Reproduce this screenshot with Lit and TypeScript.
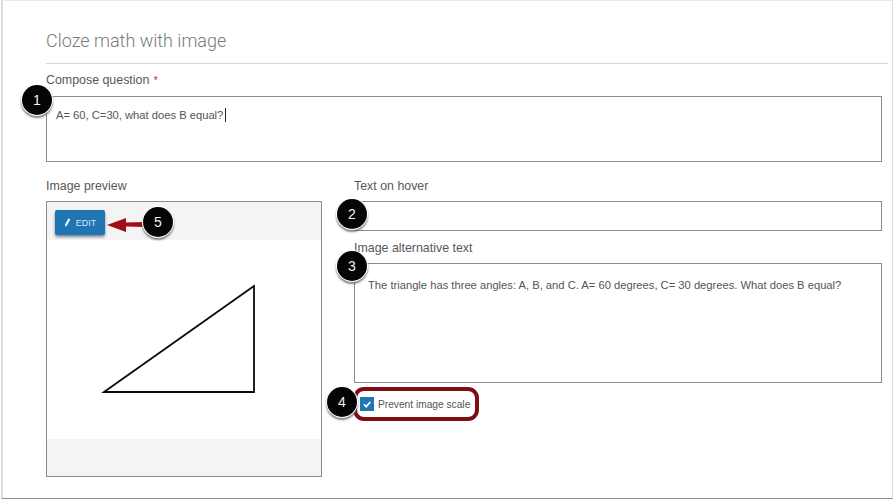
import { LitElement, css, html } from "lit";
import { customElement, property } from "lit/decorators.js";

@customElement("call-out")
class CallOut extends LitElement {
  @property({ type: Number }) x = 0;
  @property({ type: Number }) y = 0;
  @property() n = "";

  static styles = css`
    .dot {
      position: absolute;
      width: 30px;
      height: 30px;
      margin: -15px 0 0 -15px;
      border-radius: 50%;
      background: #050505;
      color: #f2f2f2;
      font: 14px/30px "Liberation Sans", Arial, sans-serif;
      text-align: center;
      box-shadow: 0 0 0 1px #fff, 0 2px 2px 1px rgba(90, 90, 90, 0.75);
    }
  `;

  render() {
    return html`<div class="dot" style="left:${this.x}px;top:${this.y}px">${this.n}</div>`;
  }
}

@customElement("app-root")
class AppRoot extends LitElement {
  static styles = css`
    :host {
      display: block;
      width: 895px;
      height: 501px;
      position: relative;
      overflow: hidden;
      background: #fff;
      font-family: "Liberation Sans", Arial, sans-serif;
      color: #5a5a5a;
    }
    .card {
      box-sizing: border-box;
      width: 892px;
      height: 499px;
      margin-left: 1px;
      padding: 0 4px 0 43px;
      background: #fff;
      border: 1px solid #dcdcdc;
      border-top-color: #e8e8e8;
      border-bottom: 1px solid #8e8e8e;
      border-left-width: 2px;
    }
    h1 {
      margin: 0;
      height: 63px;
      box-sizing: border-box;
      padding-top: 29px;
      font: 300 18px/22px Roboto, "Liberation Sans", sans-serif;
      color: #7a7a7a;
      border-bottom: 1px solid #d6d6d6;
    }
    .label {
      font-size: 12.4px;
      line-height: 14px;
      height: 14px;
      color: #585858;
    }
    .req {
      color: #b02a2a;
      font-size: 10px;
      line-height: 0;
      margin-left: 1px;
    }
    .compose {
      padding-top: 9px;
      width: 836px;
    }
    .box {
      box-sizing: border-box;
      border: 1px solid #8c8c8c;
      background: #fff;
      font-size: 11.2px;
      line-height: 14px;
      color: #555;
    }
    .question {
      height: 66px;
      margin-top: 9px;
      padding: 11px 9px;
    }
    .caret {
      display: inline-block;
      width: 1px;
      height: 14px;
      margin-left: 2px;
      background: #222;
      vertical-align: -3px;
    }
    .cols {
      display: grid;
      grid-template-columns: 276px 528px;
      column-gap: 32px;
      margin-top: 17px;
    }
    .cols .label {
      margin-bottom: 8px;
      display: block;
    }
    .preview {
      box-sizing: border-box;
      height: 276px;
      border: 1px solid #8c8c8c;
      display: grid;
      grid-template-rows: 38px 199px 1fr;
    }
    .band {
      background: #f4f4f4;
      padding: 8px;
    }
    .stage {
      background: #fff;
    }
    .stage svg {
      display: block;
    }
    .edit {
      width: 50px;
      height: 25px;
      border-radius: 2px;
      background: #1f76b3;
      color: #d5e6f2;
      font-size: 9px;
      display: flex;
      align-items: center;
      justify-content: center;
      gap: 5px;
      box-shadow: 0 2px 3px rgba(40, 60, 80, 0.6);
    }
    .hover-field {
      height: 30px;
    }
    .cols .alt-label {
      margin-top: 10px;
      margin-bottom: 0;
    }
    .alt {
      height: 120px;
      margin-top: 8px;
      padding: 14px 13px;
    }
    .scale {
      box-sizing: border-box;
      width: 126px;
      height: 34px;
      margin: 4px 0 0 -1px;
      border: 4px solid #7f0d14;
      border-radius: 11px;
      display: flex;
      align-items: center;
      gap: 4px;
      padding-left: 3px;
      font-size: 10.2px;
      color: #555;
      white-space: nowrap;
    }
    .check {
      width: 14px;
      height: 14px;
      background: #1f76b3;
      flex: none;
      display: block;
    }
    .arrow {
      position: absolute;
      left: 106px;
      top: 216px;
    }
  `;

  render() {
    return html`
      <div class="card">
        <h1>Cloze math with image</h1>
        <div class="compose">
          <div class="label">Compose question <span class="req">*</span></div>
          <div class="box question">A= 60, C=30, what does B equal?<span class="caret"></span></div>
        </div>
        <div class="cols">
          <div>
            <span class="label">Image preview</span>
            <div class="preview">
              <div class="band">
                <div class="edit">
                  <svg width="7" height="9" viewBox="0 0 7 9"><path d="M4.3.4 6.4 1.3 3 7.6 1 8.8l.1-2.3Z" fill="#f0f6fa"/></svg>
                  <span>EDIT</span>
                </div>
              </div>
              <div class="stage">
                <svg width="274" height="199" viewBox="0 0 274 199">
                  <path d="M57 152 207 46V152Z" fill="none" stroke="#0a0a0a" stroke-width="1.8"/>
                </svg>
              </div>
              <div class="band"></div>
            </div>
          </div>
          <div>
            <span class="label">Text on hover</span>
            <div class="box hover-field"></div>
            <span class="label alt-label">Image alternative text</span>
            <div class="box alt">The triangle has three angles: A, B, and C. A= 60 degrees, C= 30 degrees. What does B equal?</div>
            <div class="scale">
              <svg class="check" viewBox="0 0 14 14"><path d="M4 7.4 6.2 9.6 10.3 5" fill="none" stroke="#fff" stroke-width="1.8"/></svg>
              <span>Prevent image scale</span>
            </div>
          </div>
        </div>
      </div>
      <svg class="arrow" width="38" height="18" viewBox="0 0 38 18">
        <path d="M1 9 20 2V6.5L38 6V11L20 10.5V16Z" fill="#a00f14"/>
      </svg>
      <call-out x="37" y="100" n="1"></call-out>
      <call-out x="352" y="214" n="2"></call-out>
      <call-out x="352" y="266" n="3"></call-out>
      <call-out x="342" y="402" n="4"></call-out>
      <call-out x="158" y="222" n="5"></call-out>
    `;
  }
}
